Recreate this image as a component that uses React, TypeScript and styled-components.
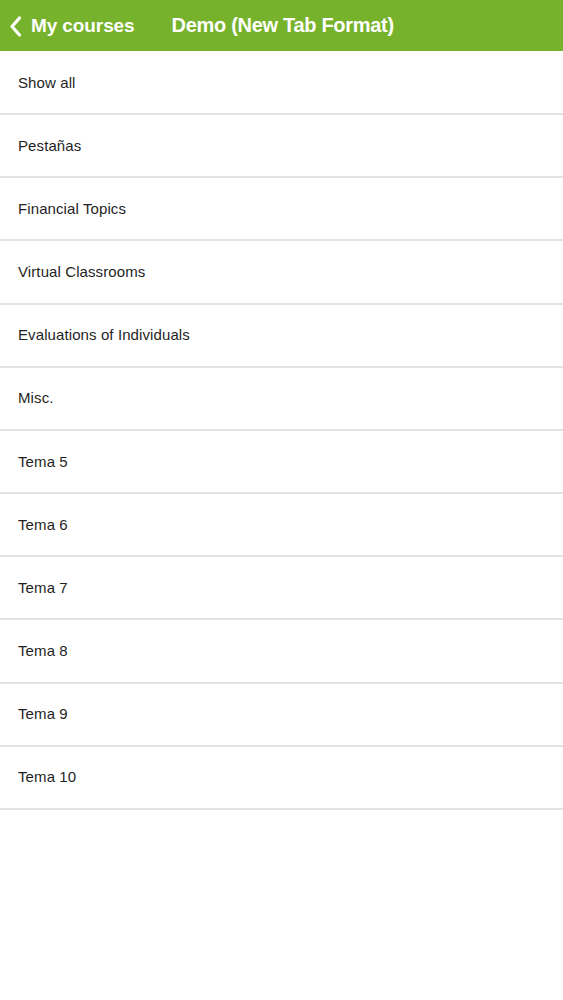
import React from "react";
import styled, { createGlobalStyle } from "styled-components";

const Global = createGlobalStyle`
  html, body { margin: 0; padding: 0; background: #ffffff; }
  body { font-family: "Liberation Sans", Arial, Helvetica, sans-serif; }
`;

const Page = styled.div`
  width: 563px;
  min-height: 1000px;
  background: #ffffff;
`;

const Header = styled.header`
  height: 51px;
  background: #77b22c;
  display: flex;
  align-items: center;
  padding-left: 9px;
  box-sizing: border-box;
  color: #ffffff;
`;

const BackButton = styled.div`
  display: flex;
  align-items: center;
  gap: 9px;
  font-size: 19px;
  font-weight: bold;
  letter-spacing: -0.1px;
  margin-top: 1px;
`;

const Title = styled.div`
  margin-left: 37px;
  font-size: 20px;
  font-weight: bold;
  letter-spacing: -0.3px;
  margin-top: -1px;
`;

const List = styled.ul`
  list-style: none;
  margin: 0;
  padding: 1px 0 0;
`;

const Row = styled.li`
  height: 63.17px;
  box-sizing: border-box;
  border-bottom: 2px solid #e3e3e3;
  display: flex;
  align-items: center;
  padding-left: 18px;
  padding-bottom: 1px;
  font-size: 15px;
  color: #1f1f1f;
  letter-spacing: 0.1px;
`;

const items = [
  "Show all",
  "Pestañas",
  "Financial Topics",
  "Virtual Classrooms",
  "Evaluations of Individuals",
  "Misc.",
  "Tema 5",
  "Tema 6",
  "Tema 7",
  "Tema 8",
  "Tema 9",
  "Tema 10",
];

export default function App() {
  return (
    <Page>
      <Global />
      <Header>
        <BackButton>
          <svg width="13" height="21" viewBox="0 0 13 21">
            <path d="M10.5 2 L3 10.5 L10.5 19" fill="none" stroke="#ffffff" strokeWidth="3.2" strokeLinecap="round" strokeLinejoin="round" />
          </svg>
          <span>My courses</span>
        </BackButton>
        <Title>Demo (New Tab Format)</Title>
      </Header>
      <List>
        {items.map((t) => (
          <Row key={t}>{t}</Row>
        ))}
      </List>
    </Page>
  );
}
